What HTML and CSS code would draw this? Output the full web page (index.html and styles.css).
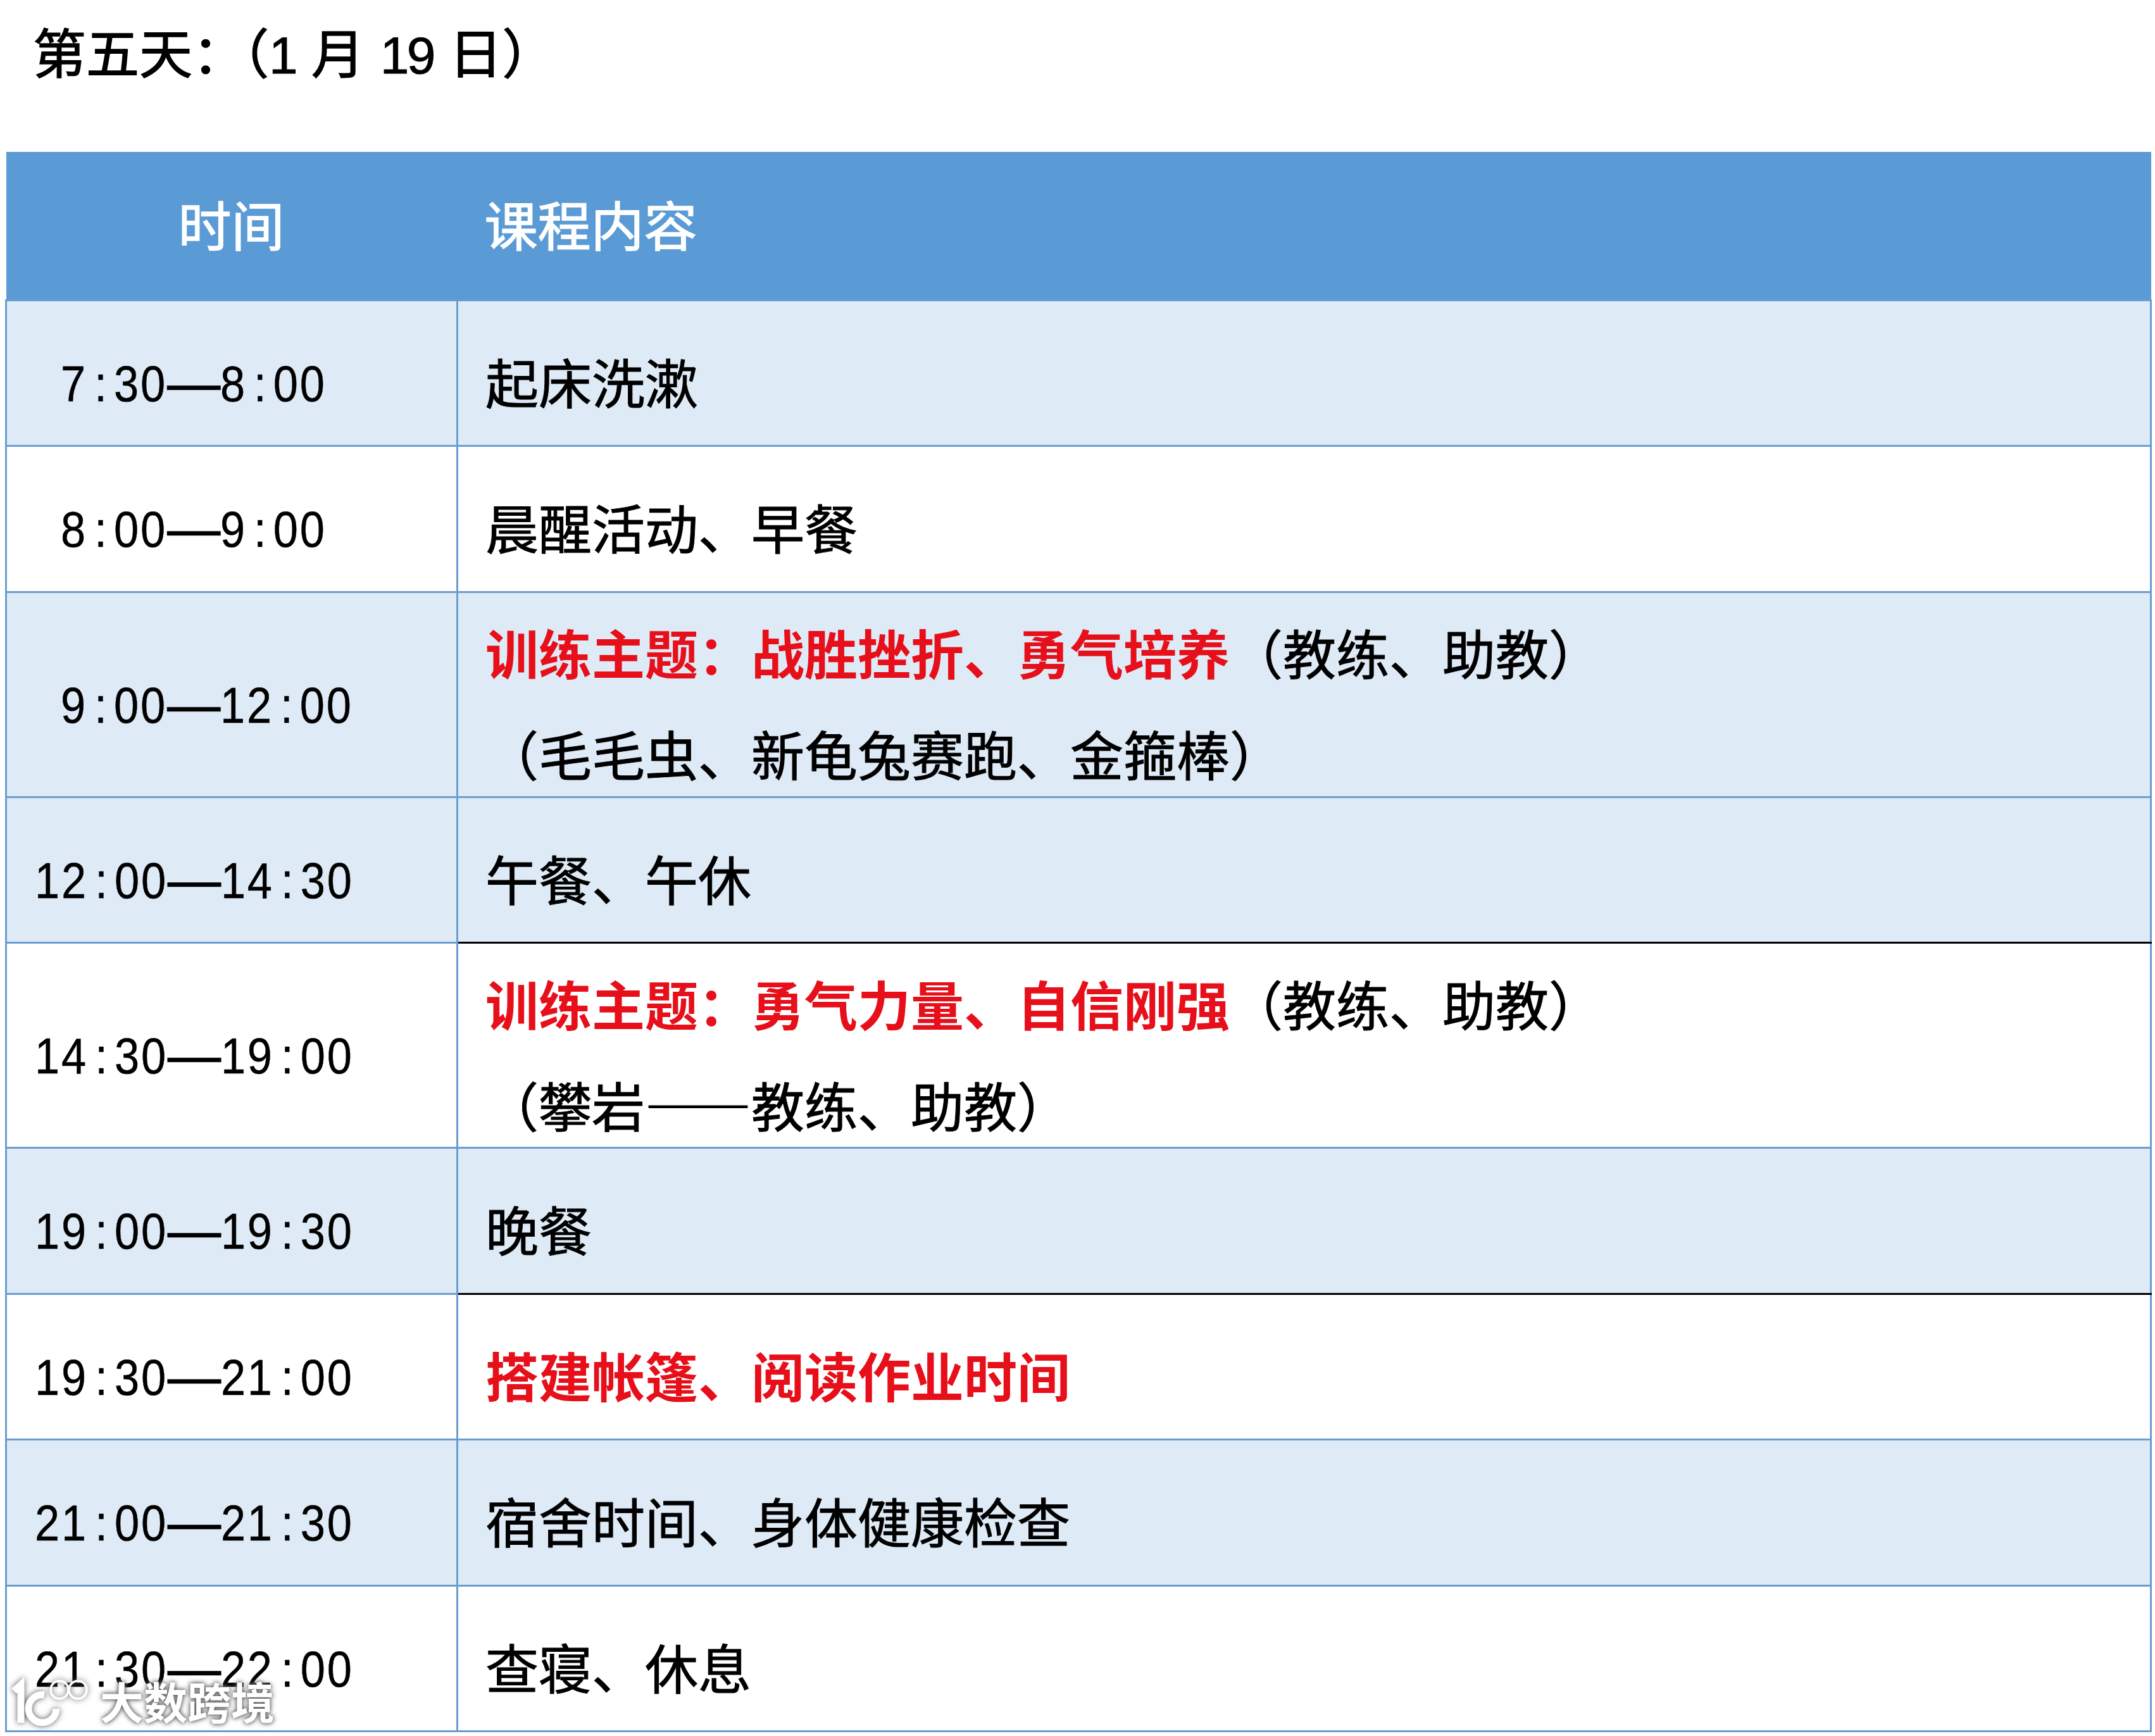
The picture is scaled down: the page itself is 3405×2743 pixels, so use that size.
FILE: index.html
```html
<!DOCTYPE html>
<html lang="zh-CN">
<head>
<meta charset="utf-8">
<title>第五天</title>
<link rel="stylesheet" href="styles.css">
</head>
<body>
<main class="page">
  <h1 class="day-title">第五天<span class="tight">&#xFF1A;</span>&#xFF08;<span class="latin">1</span> 月 <span class="latin">19</span> 日&#xFF09;</h1>
  <table class="schedule">
    <colgroup><col class="col-time"><col class="col-content"></colgroup>
    <thead>
      <tr class="row-head"><th class="head-time">时间</th><th class="head-content">课程内容</th></tr>
    </thead>
    <tbody>
      <tr class="row-single shade">
        <td class="time indent"><span class="clock">7<i>:</i>30<b>—</b>8<i>:</i>00</span></td>
        <td class="content">起床洗漱</td>
      </tr>
      <tr class="row-single">
        <td class="time indent"><span class="clock">8<i>:</i>00<b>—</b>9<i>:</i>00</span></td>
        <td class="content">晨醒活动、早餐</td>
      </tr>
      <tr class="row-double shade">
        <td class="time indent"><span class="clock">9<i>:</i>00<b>—</b>12<i>:</i>00</span></td>
        <td class="content"><p class="line"><strong class="theme">训练主题&#xFF1A;战胜挫折、勇气培养</strong>&#xFF08;教练、助教&#xFF09;</p><p class="line">&#xFF08;毛毛虫、新龟兔赛跑、金箍棒&#xFF09;</p></td>
      </tr>
      <tr class="row-single shade">
        <td class="time"><span class="clock">12<i>:</i>00<b>—</b>14<i>:</i>30</span></td>
        <td class="content dark-rule">午餐、午休</td>
      </tr>
      <tr class="row-double">
        <td class="time"><span class="clock">14<i>:</i>30<b>—</b>19<i>:</i>00</span></td>
        <td class="content"><p class="line"><strong class="theme">训练主题&#xFF1A;勇气力量、自信刚强</strong>&#xFF08;教练、助教&#xFF09;</p><p class="line">&#xFF08;攀岩——教练、助教&#xFF09;</p></td>
      </tr>
      <tr class="row-single shade">
        <td class="time"><span class="clock">19<i>:</i>00<b>—</b>19<i>:</i>30</span></td>
        <td class="content dark-rule">晚餐</td>
      </tr>
      <tr class="row-single">
        <td class="time"><span class="clock">19<i>:</i>30<b>—</b>21<i>:</i>00</span></td>
        <td class="content"><strong class="theme">搭建帐篷、阅读作业时间</strong></td>
      </tr>
      <tr class="row-single shade">
        <td class="time"><span class="clock">21<i>:</i>00<b>—</b>21<i>:</i>30</span></td>
        <td class="content">宿舍时间、身体健康检查</td>
      </tr>
      <tr class="row-single">
        <td class="time"><span class="clock">21<i>:</i>30<b>—</b>22<i>:</i>00</span></td>
        <td class="content">查寝、休息</td>
      </tr>
    </tbody>
  </table>
  <div class="watermark">
    <svg class="wm-logo" viewBox="0 0 124 78" aria-hidden="true">
      <path class="wm-stroke" d="M2 24 L13 14 V74"/>
      <path class="wm-stroke" d="M50 30 A22 22 0 1 0 69 52"/>
      <circle class="wm-thin" cx="74" cy="22" r="14"/>
      <circle class="wm-thin" cx="103" cy="22" r="14"/>
    </svg>
    <span class="wm-text">大数跨境</span>
  </div>
</main>
</body>
</html>
```

FILE: styles.css
```css
* { box-sizing: border-box; }
html, body { margin: 0; padding: 0; background: #fff; }
body {
  font-family: "Noto Sans CJK SC", "Liberation Sans", sans-serif;
  color: #000;
}
.page { position: relative; width: 3405px; height: 2743px; overflow: hidden; }
.day-title {
  margin: 0;
  height: 240px;
  padding: 22px 0 0 52px;
  font-size: 84px;
  line-height: 116px;
  font-weight: 400;
  word-spacing: 6px;
  -webkit-text-stroke: 1.5px #000;
}
.tight { margin-right: -5px; }
.latin {
  font-family: "Liberation Sans", sans-serif;
  font-size: 82px;
  letter-spacing: -3.6px;
  -webkit-text-stroke: 1px #000;
}
.schedule {
  margin-left: 8px;
  width: 3392px;
  table-layout: fixed;
  border-collapse: collapse;
  font-size: 84px;
}
.col-time { width: 713px; }
.row-head { height: 234px; background: #5b9bd5; color: #fff; }
.row-head th { font-weight: 400; padding: 0 0 8px; border: 0; -webkit-text-stroke: 1.5px #fff; }
.head-time { text-align: left; padding-left: 272px !important; }
.head-content { text-align: left; padding-left: 43px !important; }
.row-single { height: 230.5px; }
.row-double { height: 324px; }
.shade { background: #deeaf6; }
.schedule td {
  border: 3px solid #6a9dcf;
  padding: 24px 0 0 0;
  vertical-align: middle;
}
.schedule td.time { padding: 16px 0 0 44px; }
.schedule td.time.indent { padding-left: 85px; }
.content {
  padding-left: 43px !important;
  white-space: nowrap;
  -webkit-text-stroke: 1px #000;
}
.schedule td.dark-rule { border-bottom-color: #000; }
.line { margin: 0; line-height: 134px; }
.line + .line { margin-top: 26px; }
.schedule .row-double .content { padding-top: 26px; }
.theme { color: #e60f1a; font-weight: 700; -webkit-text-stroke: 0; }
.clock {
  display: inline-block;
  font-family: "Liberation Sans", sans-serif;
  font-size: 80px;
  line-height: 100px;
  letter-spacing: 3.2px;
  transform: scaleX(0.88);
  transform-origin: left center;
  white-space: nowrap;
  -webkit-text-stroke: 0.5px #000;
}
.clock i { display: inline-block; width: 47.7px; font-style: normal; text-align: center; letter-spacing: 0; }
.clock b {
  display: inline-block;
  width: 95.5px;
  font-size: 96px;
  line-height: 0;
  font-weight: 400;
  letter-spacing: 0;
  text-align: center;
  vertical-align: -3px;
}
.watermark {
  position: absolute;
  left: 20px;
  top: 2648px;
  display: flex;
  align-items: flex-end;
  gap: 14px;
}
.wm-logo { width: 124px; height: 78px; overflow: visible; filter: drop-shadow(0 0 5px #555); }
.wm-stroke { fill: none; stroke: #fff; stroke-width: 11; }
.wm-thin { fill: none; stroke: #fff; stroke-width: 3.5; }
.wm-text {
  font-size: 69px;
  line-height: 78px;
  font-weight: 700;
  color: #fff;
  text-shadow: 0 0 6px #555, 0 0 10px #888;
}
```
